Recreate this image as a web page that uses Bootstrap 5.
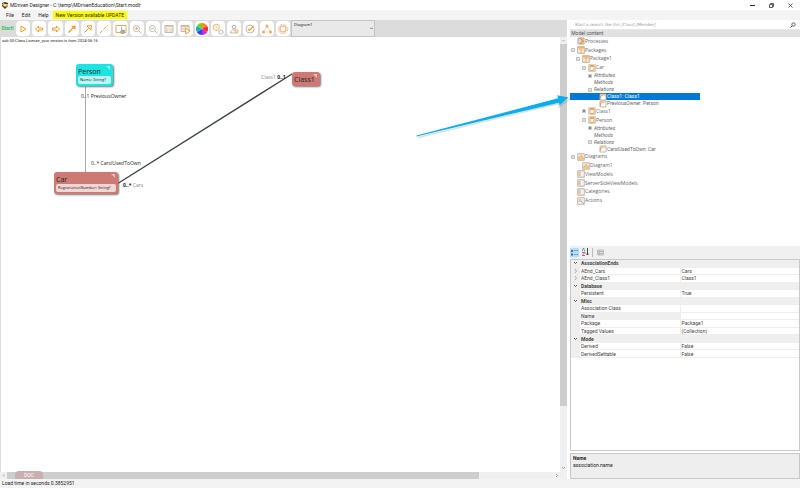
<!DOCTYPE html>
<html lang="en">
<head>
<meta charset="utf-8">
<meta name="viewport" content="width=device-width, initial-scale=1">
<title>MDriven Designer</title>
<link href="https://cdn.jsdelivr.net/npm/bootstrap@5.3.0/dist/css/bootstrap.min.css" rel="stylesheet">
<style>
body{font-family:Roboto,"Liberation Sans",sans-serif;font-size:5px;line-height:7px;color:#222;background:#fff}
button,input,select{font:inherit;color:inherit}
button{border:0;background:none;padding:0}
svg{display:block}
.app{min-height:100vh}
.title-bar{height:10px;padding-left:2px;gap:2px}
.win-btn{width:19px;height:9px}
.menu-bar{height:10px;background:#f4f4f4;padding-left:2px}
.menu-bar button{padding:0 4px;height:8px}
.menu-bar .update{background:#ff0;padding:0 3px}
.side{width:230px;margin-left:3px}
.work{width:0}
.tool-bar{height:17px;background:#dcdcdc}
.start{width:15px;color:#2fc456;font-weight:700}
.tools{display:grid;grid-template-columns:repeat(17,1fr);width:276px;gap:2px;padding:1px}
.tools button{background:#fff;border-radius:4px;height:15px;display:flex;align-items:center;justify-content:center}
.tools svg{width:12px;height:12px}
.picker{width:84px;height:17px}
.picker select{appearance:none;width:100%;height:100%;border:1px solid #c4c4c4;background:#e9e9e9;padding:0 2px 8px;border-radius:0;line-height:6px;font-size:4px;font-family:"Noto Sans",sans-serif}
.picker svg{position:absolute;right:2px;top:7px}
.canvas{background:#fff;border-left:1px solid #ddd}
.licence{font-size:4px;line-height:6px;padding:1px 1px}
.vbar{width:7px;background:#f0f0f0}
.vbar .thumb{background:#cdcdcd;height:362px}
.hbar{height:7px;background:#f0f0f0}
.hbar .thumb{background:#cdcdcd;width:472px}
.node{position:absolute;border-radius:3px;padding:3px 2px 2px;box-shadow:1px 1px 2px #777;font-family:"Open Sans",sans-serif;color:#222}
.node h2{font-size:7px;line-height:9px;margin:0;font-weight:400}
.node p{font-size:4px;line-height:8px;margin:0;border-radius:2px;background:#ffffffb0;padding:0 2px;white-space:nowrap}
.node.cyan{background:#1ee3e1}
.node.red{background:#cd7a74}
.node::after{content:"";position:absolute;right:3px;top:2px;border-top:4px solid #ffffff80;border-left:4px solid transparent}
.tag{position:absolute;font:5px/7px "Open Sans",sans-serif;white-space:nowrap}
.tag span{color:#888}
.doc{position:absolute;left:14px;bottom:-7px;width:28px;height:8px;background:#c9b0b0;color:#fff;border-radius:4px 4px 0 0;text-align:center;line-height:9px}
.search{height:10px;border-bottom:1px solid #e8e8e8}
.search input{border:0;width:100%;padding:0 5px;outline:0;font:italic 4px/7px "DejaVu Sans",sans-serif;height:9px}
.search input::placeholder{color:#999;opacity:1}
.side-head{height:7px;background:#e1e1e1;color:#555}
.tree{height:209px}
.tree ul{height:168px;list-style:none;margin:0;padding:0;display:flex;flex-direction:column;font-family:"Open Sans",sans-serif;color:#666}
.tree li{flex:5 1 0;min-height:0;display:flex;align-items:center;white-space:nowrap}
.tree li.fine{flex-grow:4;font-family:Roboto,sans-serif}
.tree svg{flex:none}
.tree .ico{width:8px;height:8px}
.tree .exp{width:4px;height:4px;margin:0 2px 0 1px}
.tree .none{visibility:hidden}
.lv1{padding-left:5px}.lv2{padding-left:11px}.lv3{padding-left:17px}.lv4{padding-left:22px}
.tree .chosen{background:#0078d7;color:#fff;width:130px}
.strip{height:13px;background:#f0f0f0;padding-bottom:1px;gap:2px}
.strip button{height:9px;width:9px;display:flex;align-items:center;justify-content:center}
.strip svg{flex:none}
.strip .on{background:#b5dcf8}
.strip .sheet{border-left:1px solid #bbb;width:13px;padding-left:2px}
.props{border:1px solid #c8c8c8;min-height:0}
.props table{width:100%;height:98px;border-collapse:collapse;table-layout:fixed;color:#444}
.props td,.props th{padding:0 1px;border-bottom:1px solid #eee;line-height:6px;font-weight:400}
.props th[scope=row]{border-right:1px solid #eee}
.props .mk{width:9px;background:#efefef;padding:0 2px}
.props .grp th{font-weight:700;background:#efefef}
.props .cur{background:#efefef}
.desc{height:26px;border:1px solid #c8c8c8;background:#eee;margin-top:2px;padding:1px 2px}
.status{height:9px;background:#f3f3f3;line-height:9px;padding-left:2px}
.pointer-arrow{position:absolute;left:410px;top:88px;pointer-events:none}
</style>
<script src="https://cdn.jsdelivr.net/npm/bootstrap@5.3.0/dist/js/bootstrap.bundle.min.js"></script>
</head>
<body>
<svg width="0" height="0" class="position-absolute" aria-hidden="true">
<defs>
<symbol id="minus" viewBox="0 0 4 4"><path d="M.5.5h3v3h-3zM1 2h2" fill="none" stroke="#999" stroke-width=".6"/></symbol>
<symbol id="plus" viewBox="0 0 4 4"><path d="M.5.5h3v3h-3z" fill="none" stroke="#aaa" stroke-width=".6"/><path d="M1 2h2M2 1v2" stroke="#444" stroke-width=".8"/></symbol>
<symbol id="proc" viewBox="0 0 8 8"><path d="M1 1h6v6H1z" fill="#ddd" stroke="#aaa"/><path d="M3 1l3 3-3 3" fill="none" stroke="#f59a22" stroke-width="1.6"/></symbol>
<symbol id="pack" viewBox="0 0 8 8"><path d="M.7.7h6.6v6.6H.7z" fill="#fff1df" stroke="#b3a08c" stroke-width=".8"/><path d="M1 1.700h6M4 3v4M1.500 3h5" stroke="#f5a64c"/></symbol>
<symbol id="cls" viewBox="0 0 8 8"><path d="M.7.7h6.6v6.6H.7z" fill="#eee" stroke="#bbb" stroke-width=".8"/><path d="M2 1.500h4v5H2z" fill="#fff" stroke="#f5a64c"/><path d="M2 2.500h4" stroke="#f5a64c"/></symbol>
<symbol id="rel" viewBox="0 0 8 8"><path d="M1 1h6v6H1z" fill="#fff" stroke="#aaa" stroke-width=".8"/><path d="M1.500 6V3.500L3 2h3" fill="none" stroke="#f5a64c" stroke-width="1.200"/></symbol>
<symbol id="dia" viewBox="0 0 8 8"><path d="M.7.7h6.600v6.600H.7z" fill="#f5f0ea" stroke="#aaa" stroke-width=".8"/><path d="M4 2v2M2 6V4h4v2M1.500 6h5M3.500 2h1" fill="none" stroke="#f5a64c"/></symbol>
<symbol id="view" viewBox="0 0 8 8"><path d="M.7.7h6.600v6.600H.7z" fill="#e8e8e8" stroke="#aaa" stroke-width=".8"/><path d="M1.500 2h2v4h-2z" fill="#f7b872"/><path d="M4.500 2v4M6 2v4" stroke="#fff" stroke-width=".7"/></symbol>
<symbol id="act" viewBox="0 0 8 8"><path d="M.7.7h6.600v6.600H.7z" fill="#f4f4f4" stroke="#aaa" stroke-width=".8"/><path d="M1.500 2h3v3h-3z" fill="#f7c48a"/><path d="M4 4l3 3" stroke="#aaa"/></symbol>
</defs>
</svg>
<div class="app d-flex flex-column position-relative">
<header>
<div class="title-bar d-flex align-items-center">
<svg class="flex-shrink-0" width="6" height="7" viewBox="0 0 6 7"><path d="M0 1l3-1 3 1v3L3 7 0 4z" fill="#3d3629"/><path d="M1 1l2 1h3v2L3 5 0 3z" fill="#f5b331"/><circle cx="3" cy="3" r="1" fill="#eee"/></svg>
<span class="flex-grow-1">MDriven Designer - C:\temp\MDrivenEducation\Start.modlr</span>
<div class="d-flex">
<button class="win-btn" aria-label="Minimize"><svg class="m-auto" width="5" height="5"><path d="M0 2.500h5" stroke="#333"/></svg></button>
<button class="win-btn" aria-label="Restore"><svg class="m-auto" width="5" height="5"><path d="M.5 1.500h3v3h-3zM1.500 1V.5h3v3H4" fill="none" stroke="#333" stroke-width=".8"/></svg></button>
<button class="win-btn" aria-label="Close"><svg class="m-auto" width="5" height="5"><path d="M.5.5l4 4M4.500.5l-4 4" stroke="#333" stroke-width=".8"/></svg></button>
</div>
</div>
<nav class="menu-bar d-flex align-items-center" aria-label="Main menu"><button>File</button><button>Edit</button><button>Help</button><button class="update">New Version available UPDATE</button></nav>
</header>
<div class="d-flex flex-grow-1">
<main class="work flex-grow-1 d-flex flex-column">
<div class="tool-bar d-flex">
<button class="start">Start!</button>
<div class="tools">
<button aria-label="Run"><svg viewBox="0 0 12 12"><path d="M4 3l5 3-5 3z" fill="none" stroke="#f79a2b"/></svg></button>
<button aria-label="Back"><svg viewBox="0 0 12 12"><path d="M2.500 6l3-3v2h4v2h-4v2z" fill="none" stroke="#f79a2b"/></svg></button>
<button aria-label="Forward"><svg viewBox="0 0 12 12"><path d="M9.500 6l-3-3v2h-4v2h4v2z" fill="none" stroke="#f79a2b"/></svg></button>
<button aria-label="Association"><svg viewBox="0 0 12 12"><path d="M2.500 9.500L8 4" stroke="#f79a2b" stroke-width="1.300"/><path d="M9.500 2.500v4.500l-4.500-4z" fill="#f79a2b"/></svg></button>
<button aria-label="Generalization"><svg viewBox="0 0 12 12"><path d="M2.500 9.500L6.500 5.500M9.500 2.500L9 7 5 3z" fill="none" stroke="#f79a2b"/></svg></button>
<button aria-label="Dependency"><svg viewBox="0 0 12 12"><path d="M2 10L10 2" stroke="#f79a2b" stroke-dasharray="3 1 1 1"/></svg></button>
<button aria-label="Place"><svg viewBox="0 0 12 12"><path d="M1 2.500h10v7H1z" fill="none" stroke="#f0a75a"/><path d="M6 11L5 8l1-.5V4h1v2.500l3 .5v2L9 11z" fill="#aaa"/></svg></button>
<button aria-label="Zoom in"><svg viewBox="0 0 12 12"><circle cx="5.500" cy="5.500" r="3" fill="none" stroke="#bbb"/><path d="M8 8l2.500 2.500" stroke="#bbb"/><path d="M4 5.500h3M5.500 4v3" stroke="#f5b45f"/></svg></button>
<button aria-label="Zoom out"><svg viewBox="0 0 12 12"><circle cx="5.500" cy="5.500" r="3" fill="none" stroke="#bbb"/><path d="M8 8l2.500 2.500" stroke="#bbb"/><path d="M4 5.500h3" stroke="#f5b45f"/></svg></button>
<button aria-label="Form"><svg viewBox="0 0 12 12"><path d="M2 2.500h8v7H2z" fill="#eee" stroke="#bbb"/><path d="M2 3.500h8M3 6h2M6.500 6H9M3 8h2M6.500 8H9" stroke="#f5c898"/></svg></button>
<button aria-label="Run form"><svg viewBox="0 0 12 12"><path d="M2 2.500h8v6H2z" fill="#eee" stroke="#bbb"/><path d="M2 3.500h8M3 6h2" stroke="#f5b878"/><path d="M6 5l5 3-4 3z" fill="#fff" stroke="#f79a2b"/></svg></button>
<button aria-label="Colours"><svg viewBox="0 0 12 12"><path d="M6 6V0a6 6 0 0 1 5.200 3z" fill="#ff8a18"/><path d="M6 6l5.200-3a6 6 0 0 1 0 6z" fill="#f32c35"/><path d="M6 6l5.200 3A6 6 0 0 1 6 12z" fill="#cf28dc"/><path d="M6 6v6A6 6 0 0 1 .8 9z" fill="#423be6"/><path d="M6 6L.8 9a6 6 0 0 1 0-6z" fill="#18a9cf"/><path d="M6 6L.8 3A6 6 0 0 1 6 0z" fill="#74d321"/></svg></button>
<button aria-label="Settings"><svg viewBox="0 0 12 12"><circle cx="4.300" cy="4.300" r="3" fill="none" stroke="#f5b45f" stroke-width="1.200" stroke-dasharray="1.500 .3"/><circle cx="4.300" cy="4.300" r="1" fill="#f8ca8c"/><circle cx="9" cy="9" r="2" fill="none" stroke="#bbb" stroke-width="1.200" stroke-dasharray="1.500 .3"/></svg></button>
<button aria-label="Users"><svg viewBox="0 0 12 12"><circle cx="6" cy="4" r="1.800" fill="none" stroke="#aaa"/><path d="M2.500 10c0-4 6-4 7 0z" fill="none" stroke="#bbb"/><circle cx="8.500" cy="8" r="1.600" fill="none" stroke="#f5b45f"/></svg></button>
<button aria-label="Validate"><svg viewBox="0 0 12 12"><circle cx="6" cy="6" r="4" fill="none" stroke="#bbb"/><path d="M4 6l1.500 1.500L9.500 3" fill="none" stroke="#f79a2b" stroke-width="1.200"/></svg></button>
<button aria-label="Layout"><svg viewBox="0 0 12 12"><path d="M6 3L2.500 9h7z" fill="none" stroke="#ccc" stroke-dasharray="2 1"/><g fill="#f8ab55"><circle cx="6" cy="3" r="1.500"/><circle cx="2.500" cy="9" r="1.500"/><circle cx="9.500" cy="9" r="1.500"/></g></svg></button>
<button aria-label="Options"><svg viewBox="0 0 12 12"><circle cx="6" cy="6" r="4.800" fill="none" stroke="#ccc" stroke-dasharray="2 .7"/><circle cx="6" cy="6" r="3" fill="none" stroke="#f5c080" stroke-width="1.500"/></svg></button>
</div>
<div class="picker position-relative"><select aria-label="Diagram"><option>Diagram1</option></select><svg width="3" height="3"><path d="M0 .5L1.500 2 3 .5" fill="none" stroke="#777"/></svg></div>
</div>
<div class="d-flex flex-grow-1">
<div class="flex-grow-1 d-flex flex-column">
<section class="canvas flex-grow-1 position-relative" aria-label="Class diagram">
<div class="licence">sub 50-Class License, your version is from 2024-06-16</div>
<svg class="position-absolute top-0 start-0" width="400" height="200"><path d="M84.500 50v86" stroke="#aaa"/><path d="M116 147L291 37" stroke="#3b433d" stroke-width="1.300"/></svg>
<div class="node cyan" style="left:75px;top:27px;width:37px"><h2>Person</h2><p>Name: String?</p></div>
<div class="node red" style="left:53px;top:135px;width:64px"><h2>Car</h2><p>RegistrationNumber: String?</p></div>
<div class="node red" style="left:291px;top:35px;width:28px"><h2>Class1</h2></div>
<div class="tag" style="left:80px;top:56px">0..1 PreviousOwner</div>
<div class="tag" style="left:90px;top:123px">0..* CarsIUsedToOwn</div>
<div class="tag" style="left:122px;top:145px"><b>0..*</b> <span>Cars</span></div>
<div class="tag" style="left:260px;top:37px"><span>Class1</span> <b>0..1</b></div>
<div class="doc">DOC</div>
</section>
<div class="hbar d-flex align-items-center"><svg width="7" height="7"><path d="M4.500 2L3 3.500 4.500 5" fill="none" stroke="#999" stroke-width=".7"/></svg><div class="thumb h-100"></div><svg class="ms-auto" width="7" height="7"><path d="M3 2l1.500 1.500L3 5" fill="none" stroke="#777" stroke-width=".7"/></svg></div>
</div>
<div class="vbar d-flex flex-column"><svg width="7" height="7"><path d="M2 4.500L3.500 3 5 4.500" fill="none" stroke="#999" stroke-width=".7"/></svg><div class="thumb mb-auto"></div><svg class="mb-2" width="7" height="7"><path d="M2 3l1.500 1.500L5 3" fill="none" stroke="#777" stroke-width=".7"/></svg></div>
</div>
</main>
<aside class="side d-flex flex-column flex-shrink-0">
<div class="search d-flex align-items-center"><input aria-label="Search" placeholder="Start a search like this [Class].[Member]"><svg class="me-1 flex-shrink-0" width="6" height="6"><circle cx="3.500" cy="2.500" r="1.700" fill="none" stroke="#444" stroke-width=".8"/><path d="M2.300 3.700L.5 5.500" stroke="#444"/></svg></div>
<div class="side-head ps-0">&nbsp;Model content</div>
<div class="tree">
<ul>
<li><svg class="exp none"></svg><svg class="ico"><use href="#proc"/></svg>Processes</li>
<li><svg class="exp"><use href="#minus"/></svg><svg class="ico"><use href="#pack"/></svg>Packages</li>
<li class="lv1"><svg class="exp"><use href="#minus"/></svg><svg class="ico"><use href="#pack"/></svg>Package1</li>
<li class="lv2"><svg class="exp"><use href="#minus"/></svg><svg class="ico"><use href="#cls"/></svg>Car</li>
<li class="lv3 fine fst-italic"><svg class="exp"><use href="#plus"/></svg>Attributes</li>
<li class="lv3 fine fst-italic"><svg class="exp none"></svg>Methods</li>
<li class="lv3 fine fst-italic"><svg class="exp"><use href="#minus"/></svg>Relations</li>
<li class="lv4 fine chosen"><svg class="exp none"></svg><svg class="ico"><use href="#rel"/></svg>Class1: Class1</li>
<li class="lv4 fine"><svg class="exp none"></svg><svg class="ico"><use href="#rel"/></svg>PreviousOwner: Person</li>
<li class="lv2"><svg class="exp"><use href="#plus"/></svg><svg class="ico"><use href="#cls"/></svg>Class1</li>
<li class="lv2"><svg class="exp"><use href="#minus"/></svg><svg class="ico"><use href="#cls"/></svg>Person</li>
<li class="lv3 fine fst-italic"><svg class="exp"><use href="#plus"/></svg>Attributes</li>
<li class="lv3 fine fst-italic"><svg class="exp none"></svg>Methods</li>
<li class="lv3 fine fst-italic"><svg class="exp"><use href="#minus"/></svg>Relations</li>
<li class="lv4 fine"><svg class="exp none"></svg><svg class="ico"><use href="#rel"/></svg>CarsIUsedToOwn: Car</li>
<li><svg class="exp"><use href="#minus"/></svg><svg class="ico"><use href="#dia"/></svg>Diagrams</li>
<li class="lv1"><svg class="exp none"></svg><svg class="ico"><use href="#dia"/></svg>Diagram1</li>
<li><svg class="exp none"></svg><svg class="ico"><use href="#view"/></svg>ViewModels</li>
<li><svg class="exp none"></svg><svg class="ico"><use href="#view"/></svg>ServerSideViewModels</li>
<li><svg class="exp none"></svg><svg class="ico"><use href="#view"/></svg>Categories</li>
<li><svg class="exp none"></svg><svg class="ico"><use href="#act"/></svg>Actions</li>
</ul>
</div>
<div class="strip d-flex align-items-center">
<button class="on" aria-label="Categorized"><svg width="7" height="7"><path d="M0 1h2v2H0zM0 4.500h2v2H0z" fill="#3a6f9d"/><path d="M3 1.500h1.500M5.500 1.500H7M3 5.500h1.500M5.500 5.500H7" stroke="#5d8fb8"/></svg></button>
<button aria-label="Alphabetical"><svg width="7" height="8"><path d="M0 3.500L1.500 0 3 3.500" fill="none" stroke="#3b7fc4" stroke-width=".8"/><path d="M0 4.500h3l-3 3h3" fill="none" stroke="#a34e5b" stroke-width=".8"/><path d="M5.500 0v7M4 5.500L5.500 7 7 5.500" fill="none" stroke="#333" stroke-width=".9"/></svg></button>
<button class="sheet" aria-label="Property pages"><svg width="7" height="7"><path d="M.5 1h6v5h-6zM1 2.500h5M1 4.500h5M2.500 2v4" fill="#ddd" stroke="#aaa" stroke-width=".7"/></svg></button>
</div>
<div class="props flex-grow-1">
<table>
<colgroup><col style="width:9px"><col style="width:100px"><col></colgroup>
<tbody>
<tr class="grp"><td class="mk"><svg width="5" height="4"><path d="M1 1l1.500 1.500L4 1" fill="none" stroke="#333" stroke-width=".8"/></svg></td><th colspan="2">AssociationEnds</th></tr>
<tr><td class="mk"><svg width="5" height="4"><path d="M2 0l1.500 2L2 4" fill="none" stroke="#888" stroke-width=".7"/></svg></td><th scope="row">AEnd_Cars</th><td>Cars</td></tr>
<tr><td class="mk"><svg width="5" height="4"><path d="M2 0l1.500 2L2 4" fill="none" stroke="#888" stroke-width=".7"/></svg></td><th scope="row">AEnd_Class1</th><td>Class1</td></tr>
<tr class="grp"><td class="mk"><svg width="5" height="4"><path d="M1 1l1.500 1.500L4 1" fill="none" stroke="#333" stroke-width=".8"/></svg></td><th colspan="2">Database</th></tr>
<tr><td class="mk"></td><th scope="row">Persistent</th><td>True</td></tr>
<tr class="grp"><td class="mk"><svg width="5" height="4"><path d="M1 1l1.500 1.500L4 1" fill="none" stroke="#333" stroke-width=".8"/></svg></td><th colspan="2">Misc</th></tr>
<tr><td class="mk"></td><th scope="row">Association Class</th><td></td></tr>
<tr><td class="mk"></td><th scope="row" class="cur">Name</th><td></td></tr>
<tr><td class="mk"></td><th scope="row">Package</th><td>Package1</td></tr>
<tr><td class="mk"></td><th scope="row">Tagged Values</th><td>(Collection)</td></tr>
<tr class="grp"><td class="mk"><svg width="5" height="4"><path d="M1 1l1.500 1.500L4 1" fill="none" stroke="#333" stroke-width=".8"/></svg></td><th colspan="2">Mode</th></tr>
<tr><td class="mk"></td><th scope="row">Derived</th><td>False</td></tr>
<tr><td class="mk"></td><th scope="row">DerivedSettable</th><td>False</td></tr>
</tbody>
</table>
</div>
<div class="desc"><b>Name</b><br>association.name</div>
</aside>
</div>
<footer class="status">Load time in seconds 0.3852951</footer>
<svg class="pointer-arrow" width="162" height="55"><path d="M8 49.500L149 15.500v3.500L159 11" fill="none" stroke="#0002" stroke-width="1.500"/><path d="M6.500 47.500L148 10.300 147.300 7.300 158.500 9.500 149.500 17.300 149 14.700 6.500 48.500z" fill="#08aeee"/></svg>
</div>
</body>
</html>
